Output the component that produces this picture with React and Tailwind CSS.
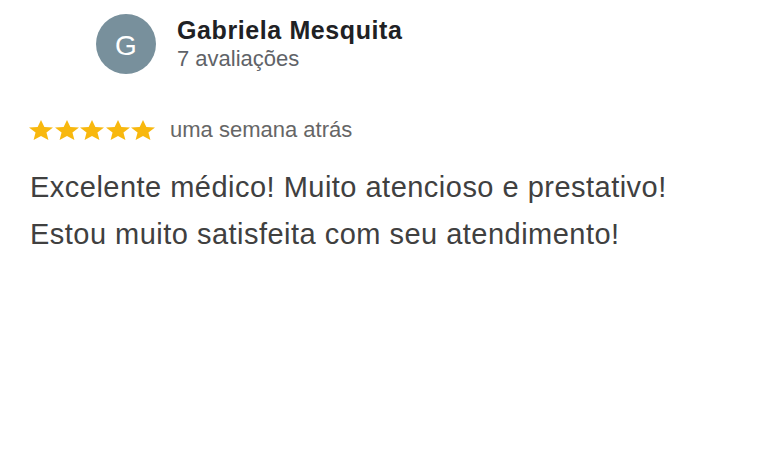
import React from "react";

function Star() {
  return (
    <svg width="24" height="20" viewBox="2 2 20 19" preserveAspectRatio="none" className="block">
      <path
        d="M12 17.27L18.18 21l-1.64-7.03L22 9.24l-7.19-.61L12 2 9.19 8.63 2 9.24l5.46 4.73L5.82 21z"
        fill="#f8b80e"
      />
    </svg>
  );
}

export default function App() {
  return (
    <div className="w-[768px] h-[475px] bg-white font-['Liberation_Sans',Arial,sans-serif] overflow-hidden">
      <div className="flex items-start pt-[14px] pl-[96px] gap-[21px]">
        <div className="w-[60px] h-[60px] rounded-full bg-[#78909c] flex items-center justify-center shrink-0">
          <span className="text-white text-[28px] leading-none mt-[4px]">G</span>
        </div>
        <div className="flex flex-col">
          <div className="mt-[1px] text-[25px] leading-[30px] font-bold text-[#202124] tracking-[0.6px]">
            Gabriela Mesquita
          </div>
          <div className="mt-[1px] text-[22px] leading-[26px] text-[#5f6368]">7 avaliações</div>
        </div>
      </div>
      <div className="mt-[44px] pl-[29px] flex items-center h-[24px]">
        <div className="flex items-center gap-[1.5px]">
          <Star />
          <Star />
          <Star />
          <Star />
          <Star />
        </div>
        <span className="ml-[15px] text-[22px] leading-[24px] text-[#666666]">uma semana atrás</span>
      </div>
      <div className="mt-[22px] pl-[30px] text-[29px] leading-[47px] tracking-[0.48px] text-[#404040]">
        <div>Excelente médico! Muito atencioso e prestativo!</div>
        <div>Estou muito satisfeita com seu atendimento!</div>
      </div>
    </div>
  );
}
